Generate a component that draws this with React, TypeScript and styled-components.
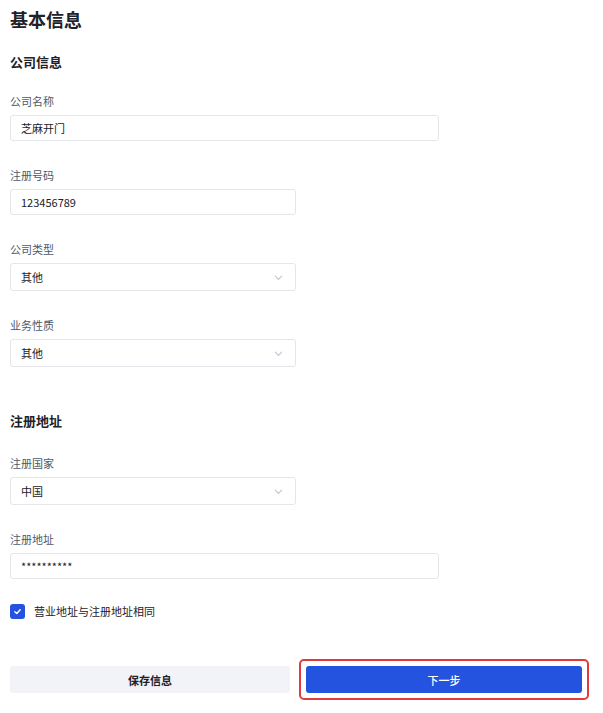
import React, { useState } from 'react';
import styled, { createGlobalStyle } from 'styled-components';

const GlobalStyle = createGlobalStyle`
  * {
    box-sizing: border-box;
  }
  body {
    margin: 0;
    background: #ffffff;
    font-family: "Noto Sans CJK SC", "Noto Sans", sans-serif;
    color: #1d2129;
  }
`;

const Page = styled.div`
  padding: 6px 14px 20px 10px;
`;

const Title = styled.h1`
  margin: 0;
  font-size: 18px;
  line-height: 26px;
  font-weight: 700;
  color: #1d2129;
`;

const SectionTitle = styled.h2<{ $gap: number }>`
  margin: ${({ $gap }) => $gap}px 0 0;
  font-size: 13px;
  line-height: 20px;
  font-weight: 700;
  color: #1d2129;
`;

const Field = styled.div<{ $gap?: number }>`
  display: flex;
  flex-direction: column;
  margin-top: ${({ $gap }) => $gap ?? 26}px;
`;

const Label = styled.label`
  font-size: 11px;
  line-height: 16px;
  color: #4e5969;
  margin-bottom: 6px;
`;

const Input = styled.input<{ $wide?: boolean }>`
  width: ${({ $wide }) => ($wide ? 429 : 286)}px;
  height: 26px;
  padding: 0 10px;
  border: 1px solid #e5e6eb;
  border-radius: 3px;
  font-family: inherit;
  font-size: 11px;
  color: #1d2129;
  background: #fff;
  outline: none;
`;

const SelectBox = styled.div`
  width: 286px;
  height: 28px;
  padding: 0 10px;
  border: 1px solid #e5e6eb;
  border-radius: 3px;
  display: flex;
  align-items: center;
  justify-content: space-between;
  font-size: 11px;
  color: #1d2129;
  background: #fff;
`;

const Chevron = styled.svg`
  width: 9px;
  height: 9px;
  margin-right: 2px;
  color: #c2c6cc;
`;

const CheckRow = styled.label`
  display: flex;
  align-items: center;
  gap: 9px;
  margin-top: 24px;
  font-size: 11px;
  line-height: 16px;
  color: #1d2129;
  cursor: pointer;
`;

const CheckBox = styled.span<{ $checked: boolean }>`
  width: 15px;
  height: 15px;
  border-radius: 3px;
  display: flex;
  align-items: center;
  justify-content: center;
  background: ${({ $checked }) => ($checked ? '#2453df' : '#fff')};
  border: ${({ $checked }) => ($checked ? 'none' : '1px solid #c9cdd4')};
`;

const Actions = styled.div`
  display: grid;
  grid-template-columns: 280px 290px;
  gap: 9px;
  align-items: center;
  margin-top: 47px;
`;

const Highlight = styled.div`
  margin: -7px 0;
  padding: 5px;
  border: 2px solid #e23b3f;
  border-radius: 5px;
  display: flex;
`;

const Button = styled.button<{ $primary?: boolean }>`
  flex: 1;
  height: 27px;
  border: none;
  border-radius: 3px;
  font-family: inherit;
  font-size: 11px;
  font-weight: ${({ $primary }) => ($primary ? 500 : 700)};
  background: ${({ $primary }) => ($primary ? '#2453df' : '#f2f3f8')};
  color: ${({ $primary }) => ($primary ? '#ffffff' : '#1d2129')};
  cursor: pointer;
`;

const ChevronIcon = () => (
  <Chevron viewBox="0 0 10 10" fill="none">
    <path d="M1.5 3.5L5 7L8.5 3.5" stroke="currentColor" strokeWidth="1.3" strokeLinecap="round" strokeLinejoin="round" />
  </Chevron>
);

const Select = ({ value }: { value: string }) => (
  <SelectBox>
    <span>{value}</span>
    <ChevronIcon />
  </SelectBox>
);

export default function App() {
  const [same, setSame] = useState(true);

  return (
    <>
      <GlobalStyle />
      <Page>
        <Title>基本信息</Title>

        <SectionTitle $gap={20}>公司信息</SectionTitle>
        <Field $gap={21}>
          <Label>公司名称</Label>
          <Input $wide defaultValue="芝麻开门" />
        </Field>
        <Field>
          <Label>注册号码</Label>
          <Input defaultValue="123456789" />
        </Field>
        <Field>
          <Label>公司类型</Label>
          <Select value="其他" />
        </Field>
        <Field>
          <Label>业务性质</Label>
          <Select value="其他" />
        </Field>

        <SectionTitle $gap={44}>注册地址</SectionTitle>
        <Field $gap={24}>
          <Label>注册国家</Label>
          <Select value="中国" />
        </Field>
        <Field>
          <Label>注册地址</Label>
          <Input $wide defaultValue="**********" />
        </Field>

        <CheckRow onClick={() => setSame(!same)}>
          <CheckBox $checked={same}>
            {same && (
              <svg width="9" height="9" viewBox="0 0 10 10" fill="none">
                <path d="M2 5.2L4.2 7.2L8 3" stroke="#fff" strokeWidth="1.6" strokeLinecap="round" strokeLinejoin="round" />
              </svg>
            )}
          </CheckBox>
          营业地址与注册地址相同
        </CheckRow>

        <Actions>
          <Button>保存信息</Button>
          <Highlight>
            <Button $primary>下一步</Button>
          </Highlight>
        </Actions>
      </Page>
    </>
  );
}
